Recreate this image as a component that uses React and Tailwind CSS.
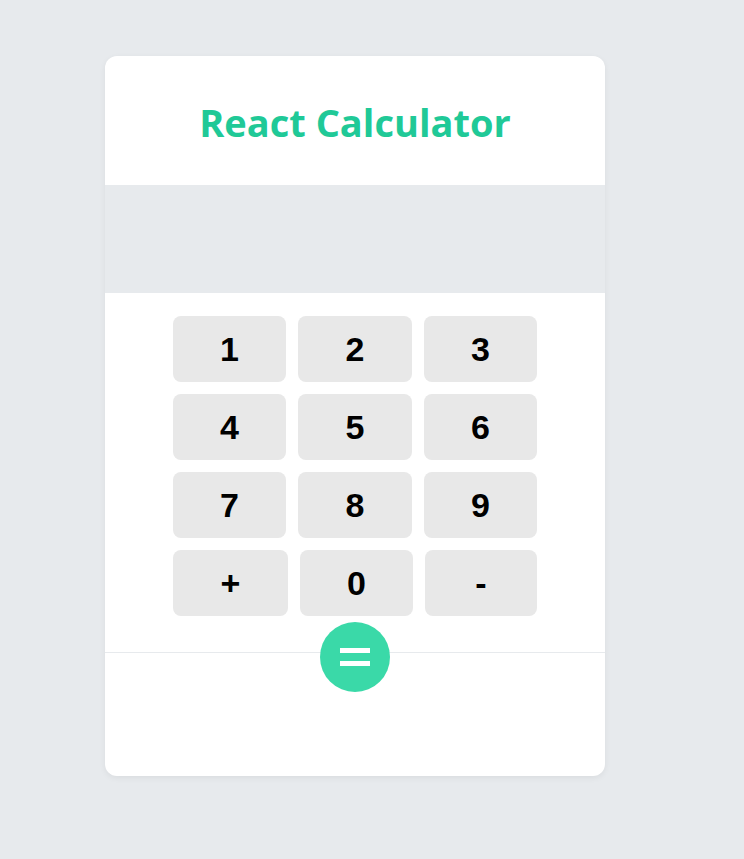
const KEYS = [
  ['1', '2', '3'],
  ['4', '5', '6'],
  ['7', '8', '9'],
]

function Key({ label, w = 'w-[113px]' }) {
  return (
    <button
      className={`${w} h-[66px] rounded-lg bg-[#e8e8e8] text-[34px] font-bold text-black flex items-center justify-center`}
      style={{ fontFamily: '"Liberation Sans", Arial, sans-serif' }}
    >
      {label}
    </button>
  )
}

export default function App() {
  return (
    <div className="min-h-[859px] bg-[#e7eaed] pt-[56px]">
      <div className="ml-[105px] w-[500px] bg-white rounded-xl shadow-[0_2px_6px_rgba(0,0,0,0.06)] overflow-hidden">
        <div className="h-[129px] flex items-center justify-center">
          <h1
            className="text-[38px] font-bold text-[#20c997] leading-none pt-[2px]"
            style={{ fontFamily: '"Open Sans", "Noto Sans", sans-serif' }}
          >
            React Calculator
          </h1>
        </div>

        <div className="h-[108px] bg-[#e7eaed]" />

        <div className="pt-[23px] border-b border-[#e7eaed] flex flex-col items-center">
          <div className="flex flex-col gap-[12px]">
            {KEYS.map((row, i) => (
              <div key={i} className="flex gap-[12px]">
                <Key label={row[0]} />
                <Key label={row[1]} w="w-[114px]" />
                <Key label={row[2]} />
              </div>
            ))}
            <div className="flex gap-[12px]">
              <Key label="+" w="w-[115px]" />
              <Key label="0" w="w-[113px]" />
              <Key label="-" w="w-[112px]" />
            </div>
          </div>
          <button className="relative z-10 mt-[6px] -mb-[40px] w-[70px] h-[70px] rounded-full bg-[#3ad9a8] flex flex-col items-center justify-center gap-[8px]">
            <span className="block w-[30px] h-[5px] bg-white" />
            <span className="block w-[30px] h-[5px] bg-white" />
          </button>
        </div>

        <div className="h-[123px]" />
      </div>
    </div>
  )
}
